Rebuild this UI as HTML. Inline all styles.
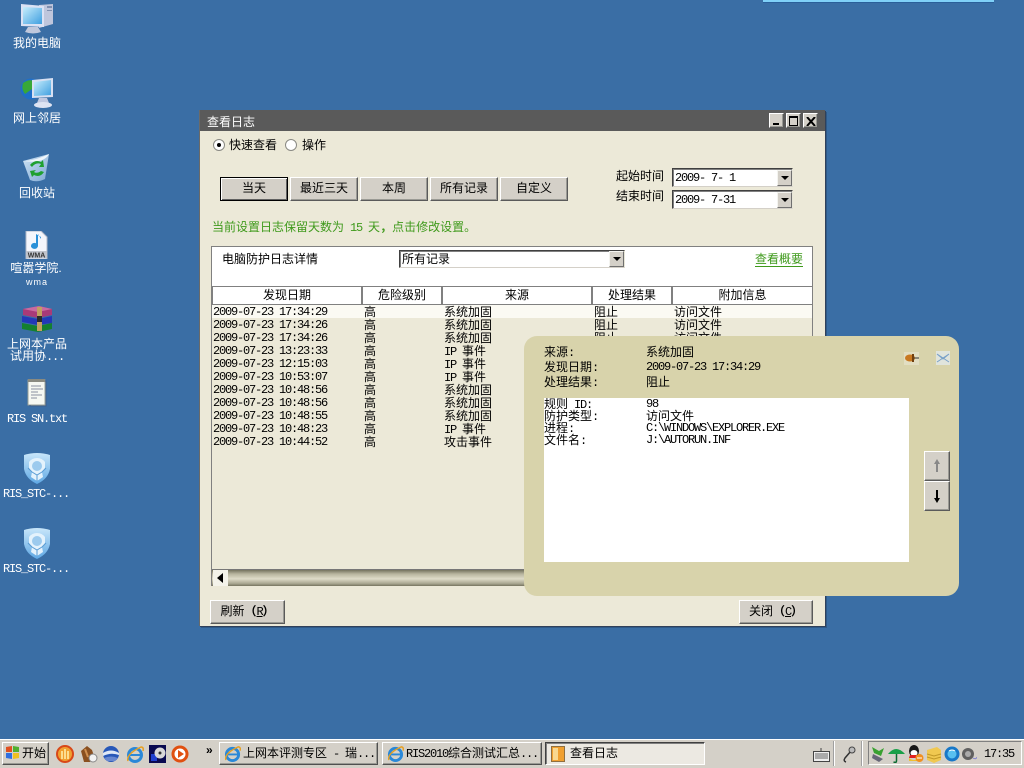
<!DOCTYPE html>
<html><head><meta charset="utf-8"><style>
html,body{margin:0;padding:0;width:1024px;height:768px;overflow:hidden;background:#3a6ea5}
body{position:relative;font-family:"Liberation Sans","WenQuanYi Zen Hei","Noto Sans CJK SC",sans-serif;font-size:12px;line-height:12px;color:#000}
div,svg{position:absolute}
.t{position:absolute;white-space:pre;font-size:12px;line-height:12px}
.m{font-family:"Liberation Mono",monospace;font-size:12px;letter-spacing:-1.2px;white-space:pre}
.w{color:#fff}
.l{width:74px;left:0;color:#fff;text-align:center;white-space:pre;line-height:12px}
.b{background:#d4d0c8;box-sizing:border-box;border:1px solid;border-color:#fff #5a5a5a #5a5a5a #fff;box-shadow:inset -1px -1px 0 #9a9a94;text-align:center;line-height:20px;white-space:pre}
.h{top:286px;height:19px;box-sizing:border-box;background:#fff;border:1px solid #808080;text-align:center;line-height:17px;border-right:2px solid #808080}
.cb{background:#fff;box-sizing:border-box;border:1px solid;border-color:#404040 #e8e6d8 #d4d0c8 #404040;box-shadow:inset 1px 1px 0 #808080;padding-left:2px;white-space:pre}
.ar{background:#d4d0c8;box-sizing:border-box;border:1px solid;border-color:#f4f4f0 #707070 #707070 #f4f4f0}
.ar:after{content:"";position:absolute;left:3px;top:5px;border:4px solid transparent;border-top:4px solid #000;border-bottom:0}
.tb{background:#d4d0c8;box-sizing:border-box;border:1px solid;border-color:#fff #505050 #505050 #fff;box-shadow:inset -1px -1px 0 #9a9a94;white-space:pre;line-height:21px}
</style></head><body>

<div style="left:763px;top:0;width:231px;height:2px;background:#7fd0f8;border-bottom:1px solid #2a5f9a"></div>

<svg width="0" height="0" style="left:0;top:0"><defs>
<linearGradient id="sc" x1="0" y1="0" x2="1" y2="1"><stop offset="0" stop-color="#c8eefc"/><stop offset="1" stop-color="#3f9fe0"/></linearGradient>
<linearGradient id="sh" x1="0" y1="0" x2="0" y2="1"><stop offset="0" stop-color="#c8e6fa"/><stop offset="1" stop-color="#5fa8e4"/></linearGradient>
<linearGradient id="bn" x1="0" y1="0" x2="1" y2="1"><stop offset="0" stop-color="#cfe4f4"/><stop offset="1" stop-color="#7fa8d4"/></linearGradient>
</defs></svg>

<svg style="left:20px;top:2px" width="34" height="32" viewBox="0 0 34 32"><path d="M19 3l14-1v20l-14 4z" fill="#bfc6dc"/><path d="M27 4h5v2h-5zM27 8h5v1h-5z" fill="#7f8fb0"/><path d="M1 2l23 2v21L1 24z" fill="#dbe2f4"/><path d="M3 5l19 1v16L3 22z" fill="url(#sc)"/><path d="M8 25h10l3 5q-8 3-16 0z" fill="#c0c8dc"/></svg>
<div class="l" style="top:37px">我的电脑</div>
<svg style="left:20px;top:76px" width="34" height="33" viewBox="0 0 34 33"><circle cx="11" cy="13" r="10.500" fill="#1f6fc8"/><path d="M3 7q7-5 12-1l-3 7-7 5q-4-5-2-11z" fill="#38a838"/><path d="M12 4l21-2v19l-21 1z" fill="#d8e0f2"/><path d="M14 6l17-2v15l-17 1z" fill="url(#sc)"/><path d="M19 22h8l2 5q-6 3-12 0z" fill="#c0c8e0"/><ellipse cx="23" cy="29" rx="9" ry="3" fill="#dfe4f2"/></svg>
<div class="l" style="top:112px">网上邻居</div>
<svg style="left:22px;top:152px" width="28" height="30" viewBox="0 0 28 30"><path d="M1 9L27 2l-4 25q-8 4-15 1z" fill="url(#bn)"/><path d="M1 9Q12 9 27 2 22 12 1 9z" fill="#eef5fb"/><path d="M10 15q4-5 9-3l-2 3 5 0-1-7-2 2q-6-3-11 3zM8 19l2 6 2-2q6 3 10-3l-3-1q-4 3-7 1l2-2z" fill="#1fa030"/></svg>
<div class="l" style="top:187px">回收站</div>
<svg style="left:25px;top:231px" width="23" height="28" viewBox="0 0 23 28"><path d="M1 0h15l6 6v22H1z" fill="#f4f6fc" stroke="#b0b8c8"/><path d="M13 3v12a3.500 3 0 1 1-2-2.800V3l5 3v2z" fill="#2a90d8"/><rect x="1" y="20" width="21" height="7" fill="#c0c4cc"/><text x="11.500" y="26.500" font-size="7" font-weight="bold" text-anchor="middle" font-family="Liberation Sans" fill="#333">WMA</text></svg>
<div class="l" style="top:262px;left:-1px">喧嚣学院.</div>
<div class="l" style="top:276px;font-family:'Liberation Sans';font-size:9px;letter-spacing:1px">wma</div>
<svg style="left:21px;top:306px" width="32" height="26" viewBox="0 0 32 26"><path d="M2 3l16-3 13 3v6l-14 3L2 9z" fill="#a83a78"/><path d="M2 3l16-3 13 3-14 3z" fill="#c86aa0"/><path d="M1 10l16 3 14-3v7l-14 2-16-3z" fill="#2238b8"/><path d="M1 17l16 3 14-3v6l-14 3-16-3z" fill="#14802f"/><path d="M16 1h5v24h-5z" fill="#c0a060"/><rect x="16" y="10" width="5" height="6" fill="#2a2a2a"/></svg>
<div class="l" style="top:338px">上网本产品</div>
<div class="l" style="top:350px">试用协<span class="m">...</span></div>
<svg style="left:27px;top:378px" width="20" height="29" viewBox="0 0 20 29"><path d="M1 2h17v25H1z" fill="#f6f8f2" stroke="#98a098"/><path d="M1 1h17v3H1z" fill="#8a8a80"/><path d="M4 8h10M4 11h12M4 14h7M4 17h11M4 20h6" stroke="#8a90a0"/><path d="M18 3h1v25H3v-1" stroke="#3f5f8a" fill="none"/></svg>
<div class="l m w" style="top:413px">RIS SN.txt</div>
<svg style="left:23px;top:453px" width="28" height="32" viewBox="0 0 28 32"><path d="M1 2q13-4 26 0v14q-2 10-13 15Q3 26 1 16z" fill="url(#sh)"/><path d="M14 5q5 0 8 4v6l-3 4 1 5-6 4-6-4 1-5-3-4V9q3-4 8-4z" fill="#e4f2fc"/><circle cx="14" cy="13" r="5" fill="#9ccaee"/><path d="M9 19l5 3 5-3M14 22v6M5 15l4 4M23 15l-4 4" stroke="#5a9cd4" fill="none"/></svg>
<div class="l m w" style="top:488px;left:-1px">RIS_STC-...</div>
<svg style="left:23px;top:528px" width="28" height="32" viewBox="0 0 28 32"><path d="M1 2q13-4 26 0v14q-2 10-13 15Q3 26 1 16z" fill="url(#sh)"/><path d="M14 5q5 0 8 4v6l-3 4 1 5-6 4-6-4 1-5-3-4V9q3-4 8-4z" fill="#e4f2fc"/><circle cx="14" cy="13" r="5" fill="#9ccaee"/><path d="M9 19l5 3 5-3M14 22v6M5 15l4 4M23 15l-4 4" stroke="#5a9cd4" fill="none"/></svg>
<div class="l m w" style="top:563px;left:-1px">RIS_STC-...</div>

<!-- main window -->
<div style="left:199px;top:110px;width:626px;height:516px;background:#ece9d8;box-shadow:1px 1px 0 #30405a,2px 2px 0 #2e5a88"></div>
<div style="left:199px;top:110px;width:626px;height:21px;background:#5a5a5a"></div>
<div style="left:199px;top:110px;width:1px;height:516px;background:#6a6a68"></div>
<div class="t w" style="left:207px;top:116px">查看日志</div>
<div class="b" style="left:769px;top:113px;width:15px;height:15px"><div style="left:3px;top:9px;width:6px;height:2px;background:#000"></div></div>
<div class="b" style="left:786px;top:113px;width:15px;height:15px"><div style="left:2px;top:2px;width:7px;height:7px;border:1px solid #000;border-top-width:2px"></div></div>
<div class="b" style="left:803px;top:113px;width:15px;height:15px"><svg style="left:2px;top:3px" width="10" height="9" viewBox="0 0 10 9"><path d="M1 0l8 9M9 0L1 9" stroke="#000" stroke-width="2"/></svg></div>

<svg style="left:213px;top:139px" width="12" height="12" viewBox="0 0 12 12"><circle cx="6" cy="6" r="5.500" fill="#fff" stroke="#8a8a84"/><circle cx="6" cy="6" r="2" fill="#000"/></svg>
<div class="t" style="left:229px;top:139px">快速查看</div>
<svg style="left:285px;top:139px" width="12" height="12" viewBox="0 0 12 12"><circle cx="6" cy="6" r="5.500" fill="#fff" stroke="#8a8a84"/></svg>
<div class="t" style="left:302px;top:139px">操作</div>

<div class="b" style="left:220px;top:177px;width:68px;height:24px;border:1px solid #000;box-shadow:inset 1px 1px 0 #fff,inset -1px -1px 0 #606060">当天</div>
<div class="b" style="left:290px;top:177px;width:68px;height:24px">最近三天</div>
<div class="b" style="left:360px;top:177px;width:68px;height:24px">本周</div>
<div class="b" style="left:430px;top:177px;width:68px;height:24px">所有记录</div>
<div class="b" style="left:500px;top:177px;width:68px;height:24px">自定义</div>

<div class="t" style="left:616px;top:170px">起始时间</div>
<div class="t" style="left:616px;top:190px">结束时间</div>
<div class="cb m" style="left:672px;top:168px;width:121px;height:19px;line-height:18px">2009- 7- 1</div>
<div class="ar" style="left:777px;top:170px;width:15px;height:16px"></div>
<div class="cb m" style="left:672px;top:190px;width:121px;height:19px;line-height:18px">2009- 7-31</div>
<div class="ar" style="left:777px;top:192px;width:15px;height:16px"></div>

<div class="t" style="left:212px;top:221px;color:#3f9a1c">当前设置日志保留天数为<span class="m"> 15 </span>天<span style="font-weight:bold">，</span>点击修改设置。</div>

<!-- panel -->
<div style="left:211px;top:246px;width:602px;height:340px;box-sizing:border-box;border:1px solid #808080;background:#ece9d8"></div>
<div style="left:212px;top:247px;width:600px;height:39px;background:#fff"></div>
<div class="t" style="left:222px;top:253px">电脑防护日志详情</div>
<div class="cb" style="left:399px;top:250px;width:226px;height:18px;line-height:16px">所有记录</div>
<div class="ar" style="left:609px;top:251px;width:15px;height:16px"></div>
<div class="t" style="left:755px;top:253px;color:#3f9a1c;border-bottom:1px solid #3f9a1c;line-height:13px">查看概要</div>

<div class="h" style="left:212px;width:151px">发现日期</div>
<div class="h" style="left:362px;width:81px">危险级别</div>
<div class="h" style="left:442px;width:151px">来源</div>
<div class="h" style="left:592px;width:81px">处理结果</div>
<div class="h" style="left:672px;width:141px;border-right-width:1px">附加信息</div>

<div style="left:212px;top:305px;width:600px;height:13px;background:#fbfaf3"></div>
<div class="t m" style="left:213px;top:306px">2009-07-23 17:34:29</div><div class="t" style="left:364px;top:306px">高</div><div class="t" style="left:444px;top:306px">系统加固</div><div class="t" style="left:594px;top:306px">阻止</div><div class="t" style="left:674px;top:306px">访问文件</div>
<div class="t m" style="left:213px;top:319px">2009-07-23 17:34:26</div><div class="t" style="left:364px;top:319px">高</div><div class="t" style="left:444px;top:319px">系统加固</div><div class="t" style="left:594px;top:319px">阻止</div><div class="t" style="left:674px;top:319px">访问文件</div>
<div class="t m" style="left:213px;top:332px">2009-07-23 17:34:26</div><div class="t" style="left:364px;top:332px">高</div><div class="t" style="left:444px;top:332px">系统加固</div><div class="t" style="left:594px;top:332px">阻止</div><div class="t" style="left:674px;top:332px">访问文件</div>
<div class="t m" style="left:213px;top:345px">2009-07-23 13:23:33</div><div class="t" style="left:364px;top:345px">高</div><div class="t" style="left:444px;top:345px"><span class="m">IP </span>事件</div>
<div class="t m" style="left:213px;top:358px">2009-07-23 12:15:03</div><div class="t" style="left:364px;top:358px">高</div><div class="t" style="left:444px;top:358px"><span class="m">IP </span>事件</div>
<div class="t m" style="left:213px;top:371px">2009-07-23 10:53:07</div><div class="t" style="left:364px;top:371px">高</div><div class="t" style="left:444px;top:371px"><span class="m">IP </span>事件</div>
<div class="t m" style="left:213px;top:384px">2009-07-23 10:48:56</div><div class="t" style="left:364px;top:384px">高</div><div class="t" style="left:444px;top:384px">系统加固</div>
<div class="t m" style="left:213px;top:397px">2009-07-23 10:48:56</div><div class="t" style="left:364px;top:397px">高</div><div class="t" style="left:444px;top:397px">系统加固</div>
<div class="t m" style="left:213px;top:410px">2009-07-23 10:48:55</div><div class="t" style="left:364px;top:410px">高</div><div class="t" style="left:444px;top:410px">系统加固</div>
<div class="t m" style="left:213px;top:423px">2009-07-23 10:48:23</div><div class="t" style="left:364px;top:423px">高</div><div class="t" style="left:444px;top:423px"><span class="m">IP </span>事件</div>
<div class="t m" style="left:213px;top:436px">2009-07-23 10:44:52</div><div class="t" style="left:364px;top:436px">高</div><div class="t" style="left:444px;top:436px">攻击事件</div>

<!-- scrollbar -->
<div style="left:212px;top:569px;width:600px;height:16px;background:linear-gradient(#75735f,#b8b59f 25%,#dedbc8 55%,#a8a690 85%,#75735f);border-top:1px solid #777"></div>
<div style="left:213px;top:570px;width:15px;height:16px;background:#f4f3ea"></div>
<div style="left:217px;top:573px;border:5px solid transparent;border-right:6px solid #000;border-left:0"></div>

<div class="b" style="left:210px;top:600px;width:75px;height:24px">刷新<span style="font-weight:bold">（</span><span class="m" style="text-decoration:underline">R</span><span style="font-weight:bold">）</span></div>
<div class="b" style="left:739px;top:600px;width:74px;height:24px">关闭<span style="font-weight:bold">（</span><span class="m" style="text-decoration:underline">C</span><span style="font-weight:bold">）</span></div>

<!-- popup -->
<div style="left:524px;top:336px;width:435px;height:260px;background:#d8d3ab;border-radius:13px"></div>
<div class="t" style="left:544px;top:346px">来源<span class="m">:</span></div><div class="t" style="left:646px;top:346px">系统加固</div>
<div class="t" style="left:544px;top:361px">发现日期<span class="m">:</span></div><div class="t m" style="left:646px;top:361px">2009-07-23 17:34:29</div>
<div class="t" style="left:544px;top:376px">处理结果<span class="m">:</span></div><div class="t" style="left:646px;top:376px">阻止</div>
<div style="left:544px;top:398px;width:365px;height:164px;background:#fff"></div>
<div class="t" style="left:544px;top:398px">规则<span class="m"> ID:</span></div><div class="t m" style="left:646px;top:398px">98</div>
<div class="t" style="left:544px;top:410px">防护类型<span class="m">:</span></div><div class="t" style="left:646px;top:410px">访问文件</div>
<div class="t" style="left:544px;top:422px">进程<span class="m">:</span></div><div class="t m" style="left:646px;top:422px">C:\WINDOWS\EXPLORER.EXE</div>
<div class="t" style="left:544px;top:434px">文件名<span class="m">:</span></div><div class="t m" style="left:646px;top:434px">J:\AUTORUN.INF</div>
<svg style="left:904px;top:352px" width="15" height="13" viewBox="0 0 15 13"><rect width="15" height="13" fill="#e2dec2"/><ellipse cx="6" cy="6" rx="5" ry="3.500" fill="#c87820"/><path d="M10 6h5" stroke="#333"/><path d="M9 2v8" stroke="#704010" stroke-width="2"/></svg>
<svg style="left:936px;top:351px" width="14" height="14" viewBox="0 0 14 14"><rect width="14" height="14" fill="#e0e4dc"/><path d="M1 3l12 8M13 3L1 11M1 3l6 5 6-5" stroke="#78a0c8" fill="none"/></svg>
<div class="b" style="left:924px;top:451px;width:26px;height:30px"><svg style="left:9px;top:7px" width="6" height="14" viewBox="0 0 6 14"><path d="M3 0l3 5H4v8H2V5H0z" fill="#888"/></svg></div>
<div class="b" style="left:924px;top:481px;width:26px;height:30px"><svg style="left:9px;top:7px" width="6" height="14" viewBox="0 0 6 14"><path d="M3 14L0 9h2V1h2v8h2z" fill="#000"/></svg></div>

<!-- taskbar -->
<div style="left:0;top:739px;width:1024px;height:29px;background:#d4d0c8;border-top:1px solid #fff;box-sizing:border-box"></div>
<div class="tb" style="left:2px;top:742px;width:47px;height:23px;padding-left:19px">开始</div>
<svg style="left:5px;top:745px" width="15" height="15" viewBox="0 0 15 15"><path d="M1 2l6-1v6H1z" fill="#e05020"/><path d="M8 1l6 1v5H8z" fill="#50b030"/><path d="M1 8h6v6l-6-1z" fill="#3070e0"/><path d="M8 8h6v5l-6 1z" fill="#f0c020"/></svg>

<svg style="left:56px;top:745px" width="18" height="18" viewBox="0 0 18 18"><circle cx="9" cy="9" r="8" fill="#f0a030"/><circle cx="9" cy="9" r="8" fill="none" stroke="#d84818" stroke-width="2"/><path d="M6 14V6M9 14V4M12 14V6" stroke="#fff2b0" stroke-width="1.500"/></svg>
<svg style="left:80px;top:745px" width="18" height="18" viewBox="0 0 18 18"><path d="M1 6l6-5 5 4 2 6-4 6H4z" fill="#8a5020"/><circle cx="13" cy="13" r="4" fill="#f2f2f2" stroke="#888"/><path d="M5 4l3 8" stroke="#d09050" stroke-width="2"/></svg>
<svg style="left:102px;top:745px" width="18" height="18" viewBox="0 0 18 18"><circle cx="9" cy="9" r="8" fill="#2858b8"/><path d="M1 8q8-5 16 0v2q-8-3-16 1z" fill="#dfe8f6"/><path d="M2 13q7-3 14 0l-3 3H5z" fill="#6888d0"/></svg>
<svg style="left:126px;top:745px" width="18" height="18" viewBox="0 0 18 18"><circle cx="9" cy="10" r="6.500" fill="none" stroke="#2a88d8" stroke-width="3"/><path d="M3 10h12" stroke="#2a88d8" stroke-width="2"/><path d="M2 16Q0 9 15 2q3 0 2 4" fill="none" stroke="#e8a020" stroke-width="1.500"/></svg>
<svg style="left:149px;top:745px" width="17" height="18" viewBox="0 0 17 18"><rect width="17" height="18" fill="#0a0a50"/><rect x="2" y="9" width="6" height="7" fill="#2040d0"/><circle cx="11" cy="8" r="5.500" fill="#d8d8d8"/><circle cx="11" cy="8" r="1.500" fill="#333"/></svg>
<svg style="left:171px;top:745px" width="18" height="18" viewBox="0 0 18 18"><circle cx="9" cy="9" r="7" fill="#fff" stroke="#e05010" stroke-width="3"/><path d="M7 5l6 4-6 4z" fill="#e05010"/></svg>
<div class="t" style="left:206px;top:744px;font-weight:bold">»</div>

<div class="tb" style="left:219px;top:742px;width:159px;height:23px;padding-left:23px">上网本评测专区<span class="m"> - </span>瑞<span class="m">...</span></div>
<svg style="left:224px;top:745px" width="17" height="17" viewBox="0 0 18 18"><circle cx="9" cy="10" r="6.500" fill="none" stroke="#2a88d8" stroke-width="3"/><path d="M3 10h12" stroke="#2a88d8" stroke-width="2"/><path d="M2 16Q0 9 15 2q3 0 2 4" fill="none" stroke="#e8a020" stroke-width="1.500"/></svg>
<div class="tb" style="left:382px;top:742px;width:160px;height:23px;padding-left:23px"><span class="m">RIS2010</span>综合测试汇总<span class="m">...</span></div>
<svg style="left:387px;top:745px" width="17" height="17" viewBox="0 0 18 18"><circle cx="9" cy="10" r="6.500" fill="none" stroke="#2a88d8" stroke-width="3"/><path d="M3 10h12" stroke="#2a88d8" stroke-width="2"/><path d="M2 16Q0 9 15 2q3 0 2 4" fill="none" stroke="#e8a020" stroke-width="1.500"/></svg>
<div style="left:545px;top:742px;width:160px;height:23px;box-sizing:border-box;background:#ece9e2;border:1px solid;border-color:#404040 #fff #fff #404040;box-shadow:inset 1px 1px 0 #808080;padding-left:24px;line-height:21px;white-space:pre">查看日志</div>
<svg style="left:551px;top:746px" width="14" height="16" viewBox="0 0 14 16"><rect x=".5" y=".5" width="13" height="15" fill="#f0a030" stroke="#907040"/><rect x="2" y="2" width="5" height="12" fill="#f8d890"/></svg>

<svg style="left:813px;top:748px" width="17" height="14" viewBox="0 0 17 14"><rect x=".5" y="3.500" width="16" height="10" fill="#eee" stroke="#444"/><path d="M2 6h13M2 8h13M2 10h13" stroke="#666"/><path d="M8 3V0" stroke="#444"/></svg>
<div style="left:834px;top:741px;width:1px;height:25px;background:#fff;box-shadow:-1px 0 0 #a0a0a0"></div>
<svg style="left:842px;top:746px" width="14" height="17" viewBox="0 0 14 17"><path d="M9 5L3 12q-2 3 1 4" stroke="#333" fill="none" stroke-width="1.500"/><circle cx="10" cy="4" r="3" fill="#bbb" stroke="#444"/></svg>
<div style="left:862px;top:741px;width:1px;height:25px;background:#fff;box-shadow:-1px 0 0 #a0a0a0"></div>
<div style="left:868px;top:741px;width:154px;height:24px;box-sizing:border-box;border:1px solid;border-color:#808080 #fff #fff #808080"></div>
<svg style="left:870px;top:745px" width="18" height="18" viewBox="0 0 18 18"><path d="M3 9l10 5-4 3-7-4z" fill="#667"/><path d="M2 2l7 4 5-3-3 8-7-3z" fill="#38a030"/></svg>
<svg style="left:888px;top:746px" width="17" height="17" viewBox="0 0 17 17"><path d="M0 8Q8-2 17 8z" fill="#18a048"/><path d="M8.500 8v7q0 2-3 1" stroke="#0a6a30" fill="none" stroke-width="1.500"/></svg>
<svg style="left:907px;top:745px" width="17" height="18" viewBox="0 0 17 18"><ellipse cx="7" cy="6" rx="5" ry="6" fill="#181818"/><ellipse cx="7" cy="8" rx="3.500" ry="3" fill="#fff"/><path d="M3 10l8 0 1 3H2z" fill="#e02020"/><path d="M2 13q5 4 10 0v3H2z" fill="#f0c030"/><circle cx="12.500" cy="13" r="4" fill="#f09020"/><path d="M10 13h5" stroke="#fff"/></svg>
<svg style="left:925px;top:746px" width="17" height="17" viewBox="0 0 17 17"><path d="M2 4l10-3 4 3v10l-7 3-7-3z" fill="#f0c850"/><path d="M2 8l7 2 7-2M2 11l7 2 7-2" stroke="#c09828" fill="none"/></svg>
<svg style="left:944px;top:746px" width="16" height="16" viewBox="0 0 16 16"><circle cx="8" cy="8" r="7.500" fill="#1878c8"/><circle cx="8" cy="8" r="4.500" fill="#58c0f0"/><path d="M5 5q3-2 6 0" stroke="#fff" fill="none"/></svg>
<svg style="left:961px;top:746px" width="16" height="16" viewBox="0 0 16 16"><circle cx="7" cy="8" r="6" fill="#606060"/><circle cx="7" cy="8" r="3" fill="#aaa"/><path d="M12 12q3 2 4-1" stroke="#8080d0" fill="none"/></svg>
<div class="t m" style="left:984px;top:748px">17:35</div>

</body></html>
